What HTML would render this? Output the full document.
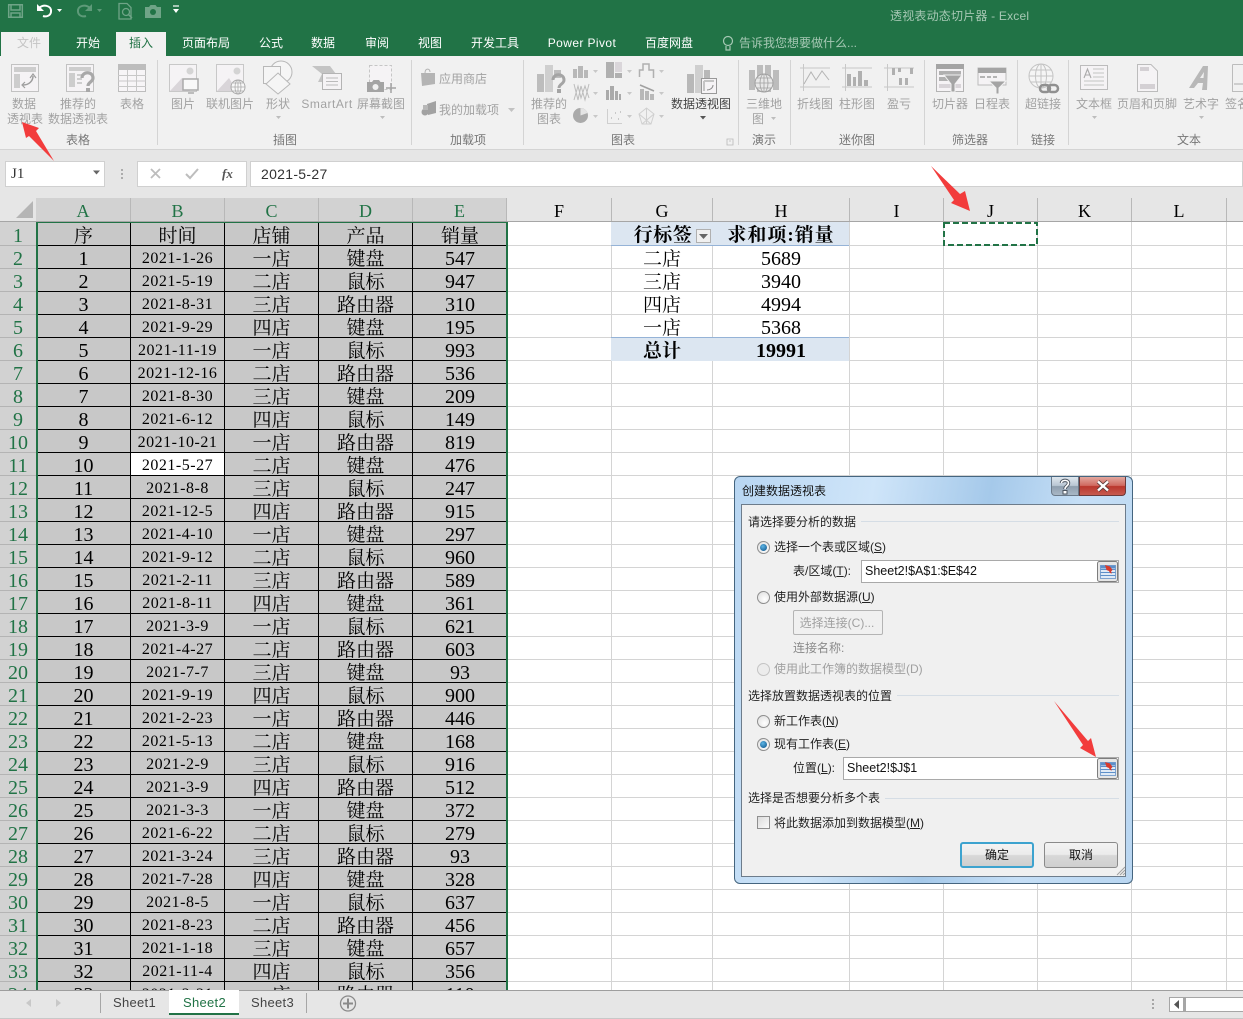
<!DOCTYPE html>
<html><head><meta charset="utf-8">
<style>
html,body{margin:0;padding:0;background:#fff}
#p{position:relative;width:1243px;height:1019px;overflow:hidden;background:#fff;font-family:"Liberation Sans","Noto Sans CJK SC",sans-serif;font-size:12px;color:#444}
#p div,#p span.t{position:absolute}
.t{position:absolute;white-space:nowrap;line-height:16px}
.c{transform:translateX(-50%)}
.g{color:#a2a2a2}
.gh{color:#777}
.w{color:#fff}
.s{font-family:"Liberation Serif","Noto Serif CJK SC",serif}
#tb{position:absolute;left:36px;top:0;width:471px;border-collapse:collapse;table-layout:fixed;background:#c8c8c8;font-family:"Liberation Serif","Noto Serif CJK SC",serif;color:#000}
#tb td{border:1px solid #000;height:18px;padding:4px 0 0;line-height:18px;text-align:center;overflow:hidden;white-space:nowrap;font-size:19px}
#tb td:nth-child(1),#tb td:nth-child(5){font-size:20px}
#tb td:nth-child(2){font-size:16px;letter-spacing:.5px}
#tb td:nth-child(3),#tb td:nth-child(4),#tb tr:first-child td{height:16px;padding-top:6px;line-height:16px}
#tb tr:first-child td{font-size:19px;letter-spacing:0}
#rh{background:#d2d2d2}
#rh div{position:relative!important;height:22px;line-height:27px;border-bottom:1px solid #b4b4b4;text-align:center;color:#217346;font-size:20px;background:#d2d2d2}
.ch{position:absolute;top:198px;height:23px;line-height:26px;text-align:center;font-size:18px;font-family:"Liberation Serif",serif;color:#000;border-right:1px solid #b8b8b8;box-sizing:border-box}
.ps{position:absolute;text-align:center;font-family:"Liberation Serif","Noto Serif CJK SC",serif;color:#000;line-height:23px;height:23px;white-space:nowrap}
.r{position:absolute;left:757px;width:11px;height:11px;border:1px solid #8f8f8f;border-radius:50%;background:radial-gradient(circle at 60% 65%,#fff,#dcdcdc)}
.r.on:after{content:"";position:absolute;left:2px;top:2px;width:7px;height:7px;border-radius:50%;background:radial-gradient(circle at 40% 35%,#5cb4e4,#0a4f86)}
.r.off{border-color:#c4c4c4;background:#ececec}
.ln{position:absolute;height:1px;background:#d5dde5}
.inp{position:absolute;background:#fff;border:1px solid #a9a9a9;box-sizing:border-box}
.btn{position:absolute;box-sizing:border-box;border-radius:3px;border:1px solid #8a8a8a;background:linear-gradient(#f3f3f3 0,#ebebeb 48%,#d8d8d8 52%,#cfcfcf 100%);text-align:center;line-height:24px;color:#111}
</style></head>
<body><div id="p">

<!-- title + tab bar -->
<div style="left:0;top:0;width:1243px;height:56px;background:#217346"></div>
<div style="left:1px;top:32px;width:48px;height:24px;background:#f1f1f1"></div>
<div style="left:116px;top:32px;width:50px;height:24px;background:#f1f1f1"></div>
<span class="t c" style="left:29px;top:35px;color:#c4c4c4">文件</span>
<span class="t c w" style="left:88px;top:35px">开始</span>
<span class="t c" style="left:141px;top:35px;color:#217346">插入</span>
<span class="t c w" style="left:206px;top:35px">页面布局</span>
<span class="t c w" style="left:271px;top:35px">公式</span>
<span class="t c w" style="left:323px;top:35px">数据</span>
<span class="t c w" style="left:377px;top:35px">审阅</span>
<span class="t c w" style="left:430px;top:35px">视图</span>
<span class="t c w" style="left:495px;top:35px">开发工具</span>
<span class="t c w" style="left:582px;top:35px;letter-spacing:.4px">Power Pivot</span>
<span class="t c w" style="left:669px;top:35px">百度网盘</span>
<span class="t" style="left:739px;top:35px;color:#a6c8b4">告诉我您想要做什么...</span>
<span class="t" style="left:890px;top:8px;color:#a6c8b4;letter-spacing:.2px">透视表动态切片器 - Excel</span>

<svg style="position:absolute;left:0;top:0" width="1243" height="56" fill="none">
 <g stroke="#6fa487" stroke-width="1.5">
  <path d="M8.700 4.700H22.300V17.300H8.700Z"/><path d="M11 5V10H20V5M11 17V13H20V17"/>
 </g>
 <path d="M38 9C42 3.500 52 5 51 12C50.400 16 46 17 43 16" stroke="#fff" stroke-width="2"/>
 <path d="M37 4V11H44Z" fill="#fff"/>
 <path d="M57 9H62L59.500 12Z" fill="#fff"/>
 <path d="M91 9C87 3.500 77 5 78 12C78.600 16 83 17 86 16" stroke="#5e9a79" stroke-width="2"/>
 <path d="M92 4V11H85Z" fill="#5e9a79"/>
 <path d="M97 9H102L99.500 12Z" fill="#5e9a79"/>
 <path d="M119 3.500H127L131 7.500V19H119Z" stroke="#6fa487" stroke-width="1.300"/>
 <circle cx="126" cy="12" r="3.500" stroke="#6fa487" stroke-width="1.300"/><path d="M128.500 14.500L132 18" stroke="#6fa487" stroke-width="1.500"/>
 <path d="M145 7H149L150.500 5H155.500L157 7H161V18H145Z" fill="#6fa487"/><circle cx="153" cy="12" r="3" fill="#217346"/>
 <path d="M173 6H179" stroke="#fff" stroke-width="1.200"/><path d="M173 9H179L176 13Z" fill="#fff"/>
 <circle cx="728" cy="41" r="4.500" stroke="#a6c8b4" stroke-width="1.200"/><path d="M726 46V50H730V46" stroke="#a6c8b4" stroke-width="1.200"/>
</svg>

<!-- ribbon -->
<div style="left:0;top:56px;width:1243px;height:94px;background:#f1f1f1"></div>
<div style="left:0;top:149px;width:1243px;height:1px;background:#d4d4d4"></div>
<div style="left:157px;top:60px;width:1px;height:85px;background:#d4d4d4"></div>
<div style="left:411px;top:60px;width:1px;height:85px;background:#d4d4d4"></div>
<div style="left:523px;top:60px;width:1px;height:85px;background:#d4d4d4"></div>
<div style="left:738px;top:60px;width:1px;height:85px;background:#d4d4d4"></div>
<div style="left:790px;top:60px;width:1px;height:85px;background:#d4d4d4"></div>
<div style="left:924px;top:60px;width:1px;height:85px;background:#d4d4d4"></div>
<div style="left:1017px;top:60px;width:1px;height:85px;background:#d4d4d4"></div>
<div style="left:1068px;top:60px;width:1px;height:85px;background:#d4d4d4"></div>

<svg style="position:absolute;left:0;top:56px" width="1243" height="94" viewBox="0 56 1243 94" fill="none">
 <!-- pivot table -->
 <rect x="11.500" y="64.500" width="27" height="27" stroke="#c2c2c2" fill="#f5f3f5"/>
 <rect x="14" y="67" width="22" height="5" fill="#cdcdcd"/><rect x="14" y="74" width="6" height="14" fill="#cdcdcd"/>
 <path d="M23 85C29 85 33 81 33 76" stroke="#9e9e9e" stroke-width="1.500"/><path d="M30 78L33 74L36 78M25 82L22 85L25 88" stroke="#9e9e9e" stroke-width="1.200"/>
 <!-- recommended -->
 <rect x="66.500" y="64.500" width="27" height="27" stroke="#c2c2c2" fill="#f5f3f5"/>
 <rect x="69" y="67" width="22" height="4" fill="#cdcdcd"/><rect x="69" y="73" width="6" height="14" fill="#cdcdcd"/>
 <path d="M77 75H84M77 79H82M77 83H82" stroke="#cdcdcd" stroke-width="2"/>
 <path d="M82 78C82 71 93 71 93 78C93 82 88 82 88 86" stroke="#a8a8a8" stroke-width="3.200"/><rect x="86" y="88" width="4" height="4" fill="#a8a8a8"/>
 <!-- table -->
 <rect x="118.500" y="64.500" width="27" height="27" stroke="#bdbdbd" fill="#f7f5f7"/>
 <rect x="118" y="64" width="28" height="6" fill="#bdbdbd"/>
 <path d="M118 75.500H146M118 81H146M118 86.500H146M127.500 70V92M136.500 70V92" stroke="#c8c8c8"/>
 <!-- picture -->
 <rect x="169.500" y="64.500" width="27" height="27" stroke="#c8c8c8" fill="#f5f3f5"/>
 <path d="M170 91L182 78L190 91Z" fill="#d9d5d9"/><circle cx="190" cy="71" r="3.500" fill="#d4d4d4"/>
 <rect x="183" y="79" width="15" height="11" stroke="#aaa" stroke-width="1.500" fill="#f8f8f8"/><path d="M188 93H194" stroke="#aaa" stroke-width="1.500"/>
 <!-- online picture -->
 <rect x="216.500" y="64.500" width="27" height="27" stroke="#c8c8c8" fill="#f5f3f5"/>
 <path d="M217 91L229 78L237 91Z" fill="#d9d5d9"/><circle cx="237" cy="71" r="3.500" fill="#d4d4d4"/>
 <circle cx="238" cy="87" r="7" stroke="#aaa" fill="#f8f8f8"/><path d="M231 87H245M238 80V94M233 83H243M233 91H243" stroke="#aaa" stroke-width=".8"/><ellipse cx="238" cy="87" rx="3" ry="7" stroke="#aaa" stroke-width=".8"/>
 <!-- shapes -->
 <circle cx="281" cy="72" r="11" stroke="#b8b8b8" fill="#f5f5f5"/>
 <rect x="263.500" y="66.500" width="17" height="17" stroke="#b8b8b8" fill="#f5f5f5"/>
 <path d="M278 73L290 84L278 94L266 84Z" stroke="#b8b8b8" fill="#f5f5f5"/>
 <!-- smartart -->
 <path d="M312 66H330L336 74L330 82H318L322 74Z" fill="#c4c4c4"/>
 <rect x="322.500" y="73.500" width="19" height="16" stroke="#b4b4b4" fill="#f5f3f5"/>
 <path d="M326 78H338M326 81.500H338M326 85H338" stroke="#bbb"/>
 <!-- screenshot -->
 <rect x="369.500" y="65.500" width="22" height="24" stroke="#c6c6c6" stroke-dasharray="3 2" fill="#f5f3f5"/>
 <path d="M367 82H372L373.500 80H379L380.500 82H384V92H367Z" fill="#a4a4a4"/><circle cx="375.500" cy="87" r="3" fill="#f1f1f1"/>
 <path d="M386 88H396M391 83V93" stroke="#a4a4a4" stroke-width="1.500"/>
 <!-- store -->
 <path d="M421 73H435V84L422 86Z" fill="#b4b4b4"/><path d="M425 73C425 68 430 68 430 72" stroke="#b4b4b4"/>
 <path d="M427 104L436 101V113L428 115Z" fill="#a2a2a2"/><circle cx="425" cy="112" r="3.500" fill="#a2a2a2"/><path d="M423 105H428V110H423Z" fill="#b8b8b8"/>
 <path d="M508 108H515L511.500 112Z" fill="#c2c2c2"/>
 <!-- recommended charts -->
 <rect x="537" y="74" width="7" height="18" fill="#bdbdbd"/><rect x="545" y="65" width="8" height="27" fill="#cfcfcf"/><rect x="554" y="70" width="7" height="8" fill="#bdbdbd"/>
 <path d="M553 80C553 73 564 73 564 80C564 84 559 84 559 88" stroke="#a4a4a4" stroke-width="3"/><rect x="557" y="89" width="4" height="4" fill="#a4a4a4"/>
 <!-- small chart icons row 1 -->
 <path d="M573 69h4v9h-4zM578 66h5v12h-5zM584 70h4v8h-4z" fill="#b8b8b8"/><path d="M593 70h5l-2.500 3z" fill="#c8c8c8"/>
 <path d="M606 62h8v16h-8z" fill="#b0b0b0"/><path d="M615 62h7v10h-7z" fill="#dad6da"/><path d="M615 73h7v5h-7z" fill="#b0b0b0"/><path d="M627 70h5l-2.500 3z" fill="#c8c8c8"/>
 <path d="M639.500 77V70H643V64H649V70H653.500V78" stroke="#b0b0b0" stroke-width="1.500"/><path d="M659 70h5l-2.500 3z" fill="#c8c8c8"/>
 <!-- row 2 -->
 <path d="M574 84L578 100L581 86L585 100L589 84M574 100L578 86L581 98L585 86L589 98" stroke="#bcbcbc"/><path d="M593 92h5l-2.500 3z" fill="#c8c8c8"/>
 <path d="M606 90h3v10h-3zM610 86h4v14h-4zM615 91h3v9h-3zM619 94h2v6h-2z" fill="#aaa"/><path d="M627 92h5l-2.500 3z" fill="#c8c8c8"/>
 <path d="M640 89h4v11h-4zM645 91h4v9h-4zM650 94h4v6h-4z" fill="#b8b8b8"/><path d="M640 85L654 91" stroke="#a0a0a0" stroke-width="1.500"/><path d="M659 92h5l-2.500 3z" fill="#c8c8c8"/>
 <!-- row 3 -->
 <circle cx="580.500" cy="115.500" r="7.500" fill="#aaa"/><path d="M580.500 115.500V108A7.500 7.500 0 0 1 587.500 113Z" fill="#e4e4e4"/><path d="M593 115h5l-2.500 3z" fill="#c8c8c8"/>
 <path d="M607.500 109V123.500H622" stroke="#cfcfcf"/><path d="M611 118h1M615 113h1M618 119h1M620 112h1" stroke="#bbb" stroke-width="1.500"/><path d="M627 115h5l-2.500 3z" fill="#c8c8c8"/>
 <path d="M646.500 108L654 114L651 124H642L639 114ZM646.500 108V124M639 114L651 124M654 114L642 124" stroke="#d0d0d0"/><path d="M659 115h5l-2.500 3z" fill="#c8c8c8"/>
 <!-- pivot chart -->
 <rect x="687" y="74" width="7" height="19" fill="#b8b8b8"/><rect x="695" y="65" width="8" height="28" fill="#cfcfcf"/><rect x="704" y="70" width="6" height="10" fill="#b8b8b8"/>
 <rect x="701.500" y="78.500" width="15" height="15" stroke="#999" fill="#f5f3f5"/><path d="M704 81H714M704 81V91" stroke="#c4c4c4" stroke-width="2"/><path d="M707 90C710 90 713 88 713 85" stroke="#888"/>
 <!-- 3d map -->
 <path d="M749 70H755V90H749ZM757 65H763V92H757ZM765 65H771V92H765ZM773 70H779V90H773Z" fill="#bcbcbc"/>
 <circle cx="764" cy="83" r="9" stroke="#a0a0a0" fill="#e8e8e8"/><path d="M755 83H773M764 74V92M757 78H771M757 88H771" stroke="#a0a0a0" stroke-width=".8"/><ellipse cx="764" cy="83" rx="4" ry="9" stroke="#a0a0a0" stroke-width=".8"/>
 <!-- sparklines -->
 <path d="M800 68H830M800 87H830M803.500 64V91" stroke="#c8c8c8"/><path d="M804 84L811 72L816 80L822 71L829 80" stroke="#b4b4b4"/>
 <path d="M842 68H872M842 87H872M845.500 64V91" stroke="#c8c8c8"/><path d="M847 74h4v12h-4zM853 77h3v9h-3zM858 71h4v15h-4zM864 80h4v6h-4z" fill="#b0b0b0"/>
 <path d="M884 68H914M884 87H914M887.500 64V91" stroke="#c8c8c8"/><path d="M892 68h3v7h-3zM898 68h3v4h-3zM910 68h3v6h-3z" fill="#b0b0b0"/><path d="M899 78h3v7h-3zM905 78h3v7h-3z" fill="#b0b0b0"/>
 <!-- slicer -->
 <rect x="936.500" y="64.500" width="27" height="27" stroke="#b4b4b4" fill="#f5f3f5"/><rect x="936" y="64" width="28" height="5" fill="#a4a4a4"/>
 <rect x="939" y="71" width="22" height="4" fill="#b0b0b0"/><rect x="939" y="77" width="10" height="4" fill="#b0b0b0"/><rect x="939" y="84" width="22" height="4" fill="#d8d4d8"/>
 <path d="M944 75H962L955 84V92H951V84Z" fill="#a4a4a4" stroke="#f1f1f1"/>
 <!-- timeline -->
 <rect x="978" y="68" width="28" height="17" fill="#f5f3f5" stroke="#bbb"/><rect x="978" y="68" width="28" height="5" fill="#a4a4a4"/>
 <path d="M980 77h5M987 77h4M993 77h4" stroke="#b4b4b4" stroke-width="2"/>
 <path d="M989 81H1006L999 88V94H996V88Z" fill="#a4a4a4" stroke="#f1f1f1"/>
 <!-- hyperlink -->
 <circle cx="1041" cy="76" r="12" stroke="#c4c4c4" fill="#f5f5f5"/><ellipse cx="1041" cy="76" rx="5.500" ry="12" stroke="#c4c4c4"/><path d="M1029 76H1053M1041 64V88M1031 70H1051M1031 82H1051" stroke="#c4c4c4"/>
 <rect x="1040" y="85" width="10" height="7" rx="3.500" stroke="#909090" stroke-width="2.500"/><rect x="1048" y="85" width="10" height="7" rx="3.500" stroke="#909090" stroke-width="2.500"/>
 <!-- text box -->
 <rect x="1080.500" y="65.500" width="27" height="24" stroke="#bcbcbc" fill="#f5f3f5"/>
 <path d="M1084 78L1087.500 69L1091 78M1085 75H1090" stroke="#aaa" stroke-width="1.100"/>
 <path d="M1093 69H1104M1093 73H1104M1093 77H1104M1084 81H1104M1084 85H1104" stroke="#c4c4c4"/>
 <!-- header footer -->
 <path d="M1137.500 64.500H1151L1157.500 71V91.500H1137.500Z" stroke="#bcbcbc" fill="#f5f3f5"/><rect x="1140" y="67" width="9" height="4" fill="#d4d0d4"/><rect x="1140" y="84" width="15" height="5" fill="#d4d0d4"/>
 <!-- wordart -->
 <path d="M1189 88L1203 66H1208L1207 90H1202L1203 83H1198L1194 88ZM1200 78H1203.500L1204 72Z" fill="#b8b8b8"/>
 <!-- signature -->
 <path d="M1232.500 64.500H1243M1232.500 64.500V91.500H1243" stroke="#bcbcbc"/><path d="M1234 84H1243" stroke="#aaa"/>
 <!-- dropdown marks -->
 <path d="M276 116h5l-2.500 3zM380 116h5l-2.500 3zM1092 116h5l-2.500 3zM1199 116h5l-2.500 3zM771 117h5l-2.500 3z" fill="#bdbdbd"/>
 <path d="M700 116h6l-3 3.500z" fill="#555"/>
 <path d="M727 139h6v6h-6zM729 141h2" stroke="#b8b8b8" stroke-width=".8"/>
</svg>

<span class="t c g" style="left:24px;top:96px">数据</span>
<span class="t c g" style="left:25px;top:111px">透视表</span>
<span class="t c g" style="left:78px;top:96px">推荐的</span>
<span class="t c g" style="left:78px;top:111px">数据透视表</span>
<span class="t c g" style="left:132px;top:96px">表格</span>
<span class="t c gh" style="left:78px;top:132px">表格</span>
<span class="t c g" style="left:183px;top:96px">图片</span>
<span class="t c g" style="left:230px;top:96px">联机图片</span>
<span class="t c g" style="left:278px;top:96px">形状</span>
<span class="t c g" style="left:327px;top:96px;letter-spacing:.5px">SmartArt</span>
<span class="t c g" style="left:381px;top:96px">屏幕截图</span>
<span class="t c gh" style="left:285px;top:132px">插图</span>
<span class="t g" style="left:439px;top:71px">应用商店</span>
<span class="t g" style="left:439px;top:102px">我的加载项</span>
<span class="t c gh" style="left:468px;top:132px">加载项</span>
<span class="t c g" style="left:549px;top:96px">推荐的</span>
<span class="t c g" style="left:549px;top:111px">图表</span>
<span class="t c" style="left:701px;top:96px;color:#444">数据透视图</span>
<span class="t c gh" style="left:623px;top:132px">图表</span>
<span class="t c g" style="left:764px;top:96px">三维地</span>
<span class="t c g" style="left:758px;top:111px">图</span>
<span class="t c gh" style="left:764px;top:132px">演示</span>
<span class="t c g" style="left:815px;top:96px">折线图</span>
<span class="t c g" style="left:857px;top:96px">柱形图</span>
<span class="t c g" style="left:899px;top:96px">盈亏</span>
<span class="t c gh" style="left:857px;top:132px">迷你图</span>
<span class="t c g" style="left:950px;top:96px">切片器</span>
<span class="t c g" style="left:992px;top:96px">日程表</span>
<span class="t c gh" style="left:970px;top:132px">筛选器</span>
<span class="t c g" style="left:1043px;top:96px">超链接</span>
<span class="t c gh" style="left:1043px;top:132px">链接</span>
<span class="t c g" style="left:1094px;top:96px">文本框</span>
<span class="t c g" style="left:1147px;top:96px">页眉和页脚</span>
<span class="t c g" style="left:1201px;top:96px">艺术字</span>
<span class="t g" style="left:1225px;top:96px">签名</span>
<span class="t c gh" style="left:1189px;top:132px">文本</span>

<!-- formula bar -->
<div style="left:0;top:150px;width:1243px;height:72px;background:#e6e6e6"></div>
<div style="left:5px;top:161px;width:100px;height:26px;background:#fff;border:1px solid #d0d0d0;box-sizing:border-box"></div>
<span class="t s" style="left:11px;top:166px;font-size:15px;color:#333">J1</span>
<svg style="position:absolute;left:0;top:150px" width="250" height="40" fill="none">
 <path d="M93 20.500h7l-3.500 4z" fill="#666"/>
 <path d="M122 19v2M122 23v2M122 27v2" stroke="#999" stroke-width="1.500"/>
</svg>
<div style="left:137px;top:161px;width:110px;height:26px;background:#fff;border:1px solid #d0d0d0;box-sizing:border-box"></div>
<svg style="position:absolute;left:137px;top:161px" width="110" height="26" fill="none">
 <path d="M14 8L23 17M23 8L14 17" stroke="#bdbdbd" stroke-width="1.800"/>
 <path d="M49 13L53 17L61 8" stroke="#bdbdbd" stroke-width="2"/>
</svg>
<span class="t s" style="left:222px;top:166px;font-size:13px;font-style:italic;font-weight:bold;color:#555">fx</span>
<div style="left:250px;top:161px;width:993px;height:26px;background:#fff;border:1px solid #d0d0d0;box-sizing:border-box"></div>
<span class="t" style="left:261px;top:166px;font-size:14px;color:#333;letter-spacing:.3px">2021-5-27</span>

<!-- column headers -->
<svg style="position:absolute;left:0;top:198px" width="36" height="24"><path d="M33 3V20H16Z" fill="#b5b5b5"/></svg>
<div style="left:36px;top:198px;width:471px;height:23px;background:#d2d2d2"></div>
<div class="ch" style="left:36px;width:95px;color:#217346">A</div>
<div class="ch" style="left:131px;width:94px;color:#217346">B</div>
<div class="ch" style="left:225px;width:94px;color:#217346">C</div>
<div class="ch" style="left:319px;width:94px;color:#217346">D</div>
<div class="ch" style="left:413px;width:94px;color:#217346">E</div>
<div class="ch" style="left:507px;width:105px">F</div>
<div class="ch" style="left:612px;width:101px">G</div>
<div class="ch" style="left:713px;width:137px">H</div>
<div class="ch" style="left:850px;width:94px">I</div>
<div class="ch" style="left:944px;width:94px">J</div>
<div class="ch" style="left:1038px;width:94px">K</div>
<div class="ch" style="left:1132px;width:95px">L</div>
<div class="ch" style="left:1227px;width:16px;border:0"></div>
<div style="left:0;top:221px;width:1243px;height:1px;background:#a6a6a6"></div>

<!-- grid -->
<div id="sheet" style="left:0;top:222px;width:1243px;height:768px;overflow:hidden;background:#fff">
 <div style="left:507px;top:1px;width:736px;height:767px;background-image:repeating-linear-gradient(to bottom,transparent 0,transparent 22px,#d4d4d4 22px,#d4d4d4 23px)"></div>
 <div style="left:611px;top:0;width:1px;height:768px;background:#d4d4d4"></div>
 <div style="left:712px;top:0;width:1px;height:768px;background:#d4d4d4"></div>
 <div style="left:849px;top:0;width:1px;height:768px;background:#d4d4d4"></div>
 <div style="left:943px;top:0;width:1px;height:768px;background:#d4d4d4"></div>
 <div style="left:1037px;top:0;width:1px;height:768px;background:#d4d4d4"></div>
 <div style="left:1131px;top:0;width:1px;height:768px;background:#d4d4d4"></div>
 <div style="left:1226px;top:0;width:1px;height:768px;background:#d4d4d4"></div>

 <!-- pivot -->
 <div style="left:611px;top:0;width:238px;height:24px;background:#dce6f1;border-bottom:1px solid #95b3d7;box-sizing:border-box"></div>
 <div style="left:611px;top:115px;width:238px;height:24px;background:#dce6f1;border-top:1px solid #95b3d7;box-sizing:border-box"></div>
 <div class="ps" style="left:633px;top:2px;width:60px;font-size:19px;font-weight:bold;letter-spacing:.6px">行标签</div>
 <div style="left:696px;top:7px;width:15px;height:14px;background:#f0f0f0;border:1px solid #b0b0b0;box-sizing:border-box"></div>
 <svg style="position:absolute;left:699px;top:12px" width="10" height="6"><path d="M0 0H9L4.500 5Z" fill="#666"/></svg>
 <div class="ps" style="left:712px;top:2px;width:138px;font-size:19px;font-weight:bold;letter-spacing:1px">求和项:销量</div>
 <div class="ps" style="left:612px;top:26px;width:100px;font-size:19px">二店</div><div class="ps" style="left:713px;top:26px;width:136px;font-size:20px">5689</div>
 <div class="ps" style="left:612px;top:49px;width:100px;font-size:19px">三店</div><div class="ps" style="left:713px;top:49px;width:136px;font-size:20px">3940</div>
 <div class="ps" style="left:612px;top:72px;width:100px;font-size:19px">四店</div><div class="ps" style="left:713px;top:72px;width:136px;font-size:20px">4994</div>
 <div class="ps" style="left:612px;top:95px;width:100px;font-size:19px">一店</div><div class="ps" style="left:713px;top:95px;width:136px;font-size:20px">5368</div>
 <div class="ps" style="left:612px;top:118px;width:100px;font-size:19px;font-weight:bold">总计</div><div class="ps" style="left:713px;top:118px;width:136px;font-size:20px;font-weight:bold">19991</div>

 <!-- marching ants J1 -->
 <svg style="position:absolute;left:942px;top:-1px" width="98" height="26" fill="none"><rect x="2" y="2" width="93" height="22" stroke="#217346" stroke-width="2" stroke-dasharray="6 3"/></svg>

 <!-- row headers -->
 <div id="rh" class="s" style="left:0;top:0;width:36px;height:783px;padding-top:1px;box-sizing:border-box">
<div>1</div><div>2</div><div>3</div><div>4</div><div>5</div><div>6</div><div>7</div><div>8</div><div>9</div><div>10</div><div>11</div><div>12</div><div>13</div><div>14</div><div>15</div><div>16</div><div>17</div><div>18</div><div>19</div><div>20</div><div>21</div><div>22</div><div>23</div><div>24</div><div>25</div><div>26</div><div>27</div><div>28</div><div>29</div><div>30</div><div>31</div><div>32</div><div>33</div><div>34</div>
 </div>

 <!-- data -->
 <table id="tb">
 <colgroup><col style="width:94px"><col style="width:94px"><col style="width:94px"><col style="width:94px"><col style="width:95px"></colgroup>
 <tr><td>序</td><td>时间</td><td>店铺</td><td>产品</td><td>销量</td></tr>
 <tr><td>1</td><td>2021-1-26</td><td>一店</td><td>键盘</td><td>547</td></tr>
 <tr><td>2</td><td>2021-5-19</td><td>二店</td><td>鼠标</td><td>947</td></tr>
 <tr><td>3</td><td>2021-8-31</td><td>三店</td><td>路由器</td><td>310</td></tr>
 <tr><td>4</td><td>2021-9-29</td><td>四店</td><td>键盘</td><td>195</td></tr>
 <tr><td>5</td><td>2021-11-19</td><td>一店</td><td>鼠标</td><td>993</td></tr>
 <tr><td>6</td><td>2021-12-16</td><td>二店</td><td>路由器</td><td>536</td></tr>
 <tr><td>7</td><td>2021-8-30</td><td>三店</td><td>键盘</td><td>209</td></tr>
 <tr><td>8</td><td>2021-6-12</td><td>四店</td><td>鼠标</td><td>149</td></tr>
 <tr><td>9</td><td>2021-10-21</td><td>一店</td><td>路由器</td><td>819</td></tr>
 <tr><td>10</td><td style="background:#fff">2021-5-27</td><td>二店</td><td>键盘</td><td>476</td></tr>
 <tr><td>11</td><td>2021-8-8</td><td>三店</td><td>鼠标</td><td>247</td></tr>
 <tr><td>12</td><td>2021-12-5</td><td>四店</td><td>路由器</td><td>915</td></tr>
 <tr><td>13</td><td>2021-4-10</td><td>一店</td><td>键盘</td><td>297</td></tr>
 <tr><td>14</td><td>2021-9-12</td><td>二店</td><td>鼠标</td><td>960</td></tr>
 <tr><td>15</td><td>2021-2-11</td><td>三店</td><td>路由器</td><td>589</td></tr>
 <tr><td>16</td><td>2021-8-11</td><td>四店</td><td>键盘</td><td>361</td></tr>
 <tr><td>17</td><td>2021-3-9</td><td>一店</td><td>鼠标</td><td>621</td></tr>
 <tr><td>18</td><td>2021-4-27</td><td>二店</td><td>路由器</td><td>603</td></tr>
 <tr><td>19</td><td>2021-7-7</td><td>三店</td><td>键盘</td><td>93</td></tr>
 <tr><td>20</td><td>2021-9-19</td><td>四店</td><td>鼠标</td><td>900</td></tr>
 <tr><td>21</td><td>2021-2-23</td><td>一店</td><td>路由器</td><td>446</td></tr>
 <tr><td>22</td><td>2021-5-13</td><td>二店</td><td>键盘</td><td>168</td></tr>
 <tr><td>23</td><td>2021-2-9</td><td>三店</td><td>鼠标</td><td>916</td></tr>
 <tr><td>24</td><td>2021-3-9</td><td>四店</td><td>路由器</td><td>512</td></tr>
 <tr><td>25</td><td>2021-3-3</td><td>一店</td><td>键盘</td><td>372</td></tr>
 <tr><td>26</td><td>2021-6-22</td><td>二店</td><td>鼠标</td><td>279</td></tr>
 <tr><td>27</td><td>2021-3-24</td><td>三店</td><td>路由器</td><td>93</td></tr>
 <tr><td>28</td><td>2021-7-28</td><td>四店</td><td>键盘</td><td>328</td></tr>
 <tr><td>29</td><td>2021-8-5</td><td>一店</td><td>鼠标</td><td>637</td></tr>
 <tr><td>30</td><td>2021-8-23</td><td>二店</td><td>路由器</td><td>456</td></tr>
 <tr><td>31</td><td>2021-1-18</td><td>三店</td><td>键盘</td><td>657</td></tr>
 <tr><td>32</td><td>2021-11-4</td><td>四店</td><td>鼠标</td><td>356</td></tr>
 <tr><td>33</td><td>2021-2-21</td><td>一店</td><td>路由器</td><td>110</td></tr>
 </table>
 <!-- selection frame -->
 <div style="left:36px;top:-1px;width:472px;height:800px;border:2px solid #217346;box-sizing:border-box"></div>
</div>

<!-- sheet tabs -->
<div style="left:0;top:990px;width:1243px;height:29px;background:#e6e6e6"></div>
<div style="left:0;top:990px;width:1243px;height:1px;background:#9e9e9e"></div>
<div style="left:0;top:1018px;width:1243px;height:1px;background:#c8c8c8"></div>
<div style="left:100px;top:993px;width:1px;height:20px;background:#a6a6a6"></div>
<div style="left:306px;top:993px;width:1px;height:20px;background:#a6a6a6"></div>
<div style="left:169px;top:990px;width:70px;height:25px;background:#fff;border-bottom:2px solid #217346;box-sizing:border-box"></div>
<span class="t" style="left:113px;top:995px;font-size:13px;color:#444;letter-spacing:.3px">Sheet1</span>
<span class="t" style="left:183px;top:995px;font-size:13px;color:#217346;letter-spacing:.3px">Sheet2</span>
<span class="t" style="left:251px;top:995px;font-size:13px;color:#444;letter-spacing:.3px">Sheet3</span>
<svg style="position:absolute;left:0;top:990px" width="1243" height="29" fill="none">
 <path d="M31 9V17L26 13Z" fill="#c8c8c8"/><path d="M56 9V17L61 13Z" fill="#c8c8c8"/>
 <circle cx="348" cy="13.500" r="7.500" stroke="#8a8a8a" stroke-width="1.300"/><path d="M343 13.500H353M348 8.500V18.500" stroke="#8a8a8a" stroke-width="2"/>
 <path d="M1153 9v2M1153 13v2M1153 17v2" stroke="#a6a6a6" stroke-width="2"/>
</svg>
<div style="left:1169px;top:997px;width:15px;height:15px;background:#fff;border:1px solid #a6a6a6;box-sizing:border-box"></div>
<div style="left:1184px;top:997px;width:59px;height:15px;background:#fff;border:1px solid #a6a6a6;border-right:0;border-left-width:2px;box-sizing:border-box"></div>
<svg style="position:absolute;left:1173px;top:1000px" width="8" height="10"><path d="M6 0V9L1 4.500Z" fill="#555"/></svg>

<!-- dialog -->
<div style="left:734px;top:476px;width:399px;height:408px;box-sizing:border-box;border:1px solid #45657f;border-radius:6px;background:linear-gradient(100deg,#b8d6f2 0,#cfe5f9 30%,#a5c9ea 55%,#c6dff6 75%,#b9d6f1 100%)"></div>
<div style="left:1051px;top:477px;width:28px;height:19px;box-sizing:border-box;border:1px solid #6b7a8a;border-top:0;border-radius:0 0 0 4px;background:linear-gradient(#dfe7ee,#b9c6d3 48%,#8e9eae 52%,#a9b8c6)"></div>
<div style="left:1079px;top:477px;width:47px;height:19px;box-sizing:border-box;border:1px solid #6b3a3a;border-top:0;border-radius:0 0 4px 0;background:linear-gradient(#e2a79e,#d0695f 48%,#b9362c 52%,#c75a4f)"></div>
<svg style="position:absolute;left:1058px;top:478px" width="14" height="17" fill="none">
 <path d="M3.500 5C3.500 1.500 10.500 1.500 10.500 5C10.500 8 7 8 7 11" stroke="#4d5560" stroke-width="3.400"/><path d="M3.500 5C3.500 1.500 10.500 1.500 10.500 5C10.500 8 7 8 7 11" stroke="#fff" stroke-width="1.600"/>
 <rect x="5" y="12.500" width="4" height="3.500" fill="#fff" stroke="#4d5560"/>
</svg>
<svg style="position:absolute;left:1096px;top:480px" width="14" height="12" fill="none">
 <path d="M2 1.500L12 10.500M12 1.500L2 10.500" stroke="#5a3a3a" stroke-width="4"/><path d="M2 1.500L12 10.500M12 1.500L2 10.500" stroke="#fff" stroke-width="2.400"/>
</svg>
<span class="t" style="left:742px;top:483px;color:#111">创建数据透视表</span>

<div style="left:741px;top:504px;width:385px;height:373px;box-sizing:border-box;background:#f0f0f0;border:1px solid #6d7c8b"></div>

<span class="t" style="left:748px;top:514px;color:#222">请选择要分析的数据</span>
<div class="ln" style="left:861px;top:521px;width:258px"></div>
<div class="r on" style="top:541px"></div>
<span class="t" style="left:774px;top:539px;color:#222">选择一个表或区域(<u>S</u>)</span>
<span class="t" style="left:793px;top:563px;color:#222">表/区域(<u>T</u>):</span>
<div class="inp" style="left:861px;top:560px;width:258px;height:23px"></div>
<span class="t" style="left:865px;top:563px;font-size:12.500px;color:#111">Sheet2!$A$1:$E$42</span>
<div class="r" style="top:591px"></div>
<span class="t" style="left:774px;top:589px;color:#222">使用外部数据源(<u>U</u>)</span>
<div style="left:793px;top:610px;width:90px;height:25px;box-sizing:border-box;border:1px solid #b4b4b4;border-radius:2px;background:#f0f0f0"></div>
<span class="t c" style="left:837px;top:615px;color:#a0a0a0">选择连接(C)...</span>
<span class="t" style="left:793px;top:640px;color:#8a8a8a">连接名称:</span>
<div class="r off" style="top:663px"></div>
<span class="t" style="left:774px;top:661px;color:#a0a0a0">使用此工作簿的数据模型(D)</span>
<span class="t" style="left:748px;top:688px;color:#222">选择放置数据透视表的位置</span>
<div class="ln" style="left:897px;top:695px;width:222px"></div>
<div class="r" style="top:715px"></div>
<span class="t" style="left:774px;top:713px;color:#222">新工作表(<u>N</u>)</span>
<div class="r on" style="top:738px"></div>
<span class="t" style="left:774px;top:736px;color:#222">现有工作表(<u>E</u>)</span>
<span class="t" style="left:793px;top:760px;color:#222">位置(<u>L</u>):</span>
<div class="inp" style="left:843px;top:757px;width:276px;height:23px"></div>
<span class="t" style="left:847px;top:760px;font-size:12.500px;color:#111">Sheet2!$J$1</span>
<span class="t" style="left:748px;top:790px;color:#222">选择是否想要分析多个表</span>
<div class="ln" style="left:885px;top:798px;width:234px"></div>
<div style="left:757px;top:816px;width:13px;height:13px;box-sizing:border-box;border:1px solid #8f8f8f;background:linear-gradient(135deg,#dcdcdc,#fbfbfb)"></div>
<span class="t" style="left:774px;top:815px;color:#222">将此数据添加到数据模型(<u>M</u>)</span>
<div class="btn" style="left:960px;top:842px;width:74px;height:26px;border:2px solid #3da3cf;line-height:22px">确定</div>
<div class="btn" style="left:1044px;top:842px;width:74px;height:26px">取消</div>
<svg style="position:absolute;left:1116px;top:866px" width="10" height="10" fill="none"><path d="M9 1L1 9M9 4L4 9M9 7L7 9" stroke="#a0a0a0"/></svg>

<!-- range pickers -->
<svg style="position:absolute;left:1097px;top:561px" width="22" height="22" fill="none">
 <rect x=".5" y=".5" width="20" height="20" rx="2" fill="#e6e6e6" stroke="#7d7d7d"/>
 <rect x="3.500" y="4.500" width="15" height="13" fill="#dfeaf6" stroke="#7fa3cf"/><path d="M3.500 8.500H18.500M3.500 11.500H18.500M3.500 14.500H18.500" stroke="#5d8fc9"/>
 <rect x="3.500" y="4.500" width="15" height="3" fill="#5d8fc9"/>
 <path d="M8 4L13 5.500L15.500 9L14 10.500L15 12.500L13 12L12 10L9.500 9Z" fill="#d8392b"/>
</svg>
<svg style="position:absolute;left:1097px;top:758px" width="22" height="22" fill="none">
 <rect x=".5" y=".5" width="20" height="20" rx="2" fill="#e6e6e6" stroke="#7d7d7d"/>
 <rect x="3.500" y="4.500" width="15" height="13" fill="#dfeaf6" stroke="#7fa3cf"/><path d="M3.500 8.500H18.500M3.500 11.500H18.500M3.500 14.500H18.500" stroke="#5d8fc9"/>
 <rect x="3.500" y="4.500" width="15" height="3" fill="#5d8fc9"/>
 <path d="M8 4L13 5.500L15.500 9L14 10.500L15 12.500L13 12L12 10L9.500 9Z" fill="#d8392b"/>
</svg>

<!-- red arrows -->
<svg style="position:absolute;left:0;top:0" width="1243" height="1019">
 <path d="M22 122L39 128L36 131L54 161L29 136L26 138Z" fill="#f23c3c"/>
 <path d="M931 166L960 194L965 191L970 211L951 203L954 200Z" fill="#f23c3c"/>
 <path d="M1054 701L1088 741L1091 738L1096 757L1080 748L1083 745Z" fill="#f23c3c"/>
</svg>
</div></body></html>
